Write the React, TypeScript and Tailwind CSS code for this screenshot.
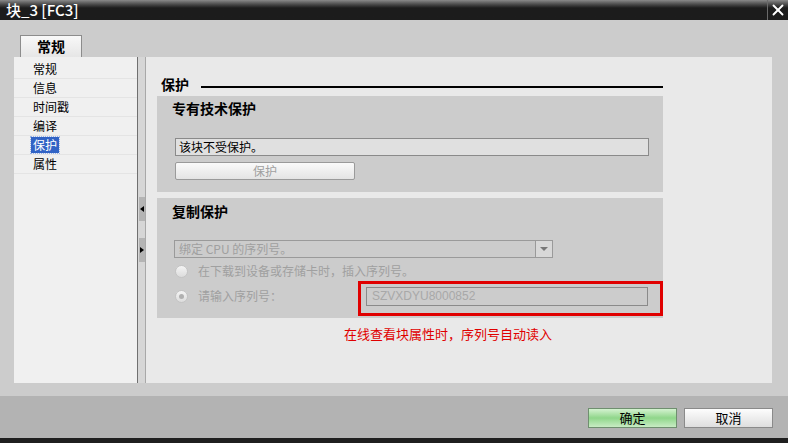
import { X } from 'lucide-react';

const navItems = ['常规', '信息', '时间戳', '编译', '保护', '属性'];

function Radio({ checked }: { checked?: boolean }) {
  return (
    <span className="w-[13px] h-[13px] rounded-full border border-[#c4c4c4] bg-gradient-to-b from-[#f4f4f4] to-[#dcdcdc] flex items-center justify-center">
      {checked && <span className="w-[5px] h-[5px] rounded-full bg-[#b0b0b0]" />}
    </span>
  );
}

function App() {
  return (
    <div className="w-[788px] h-[443px] bg-[#cccccc] flex flex-col font-['Noto_Sans_CJK_SC','Liberation_Sans',sans-serif] text-[12px] text-black overflow-hidden">
      {/* title bar */}
      <div className="h-[20px] flex bg-gradient-to-b from-[#8a8a8a] via-[#1c1c1c] via-40% to-[#1c1c1c]">
        <div className="flex-1 pl-[6px] text-white font-medium text-[15px] leading-[20px]">块_3 [FC3]</div>
        <div className="w-[21px] border-l border-[#6a6a6a] flex items-center justify-center">
          <X size={18} strokeWidth={2.5} className="text-white" />
        </div>
      </div>

      {/* tab strip */}
      <div className="h-[37px] flex items-end pl-[20px]">
        <div className="w-[62px] h-[22px] border border-b-0 border-[#8c8c8c] bg-gradient-to-b from-[#f8f8f8] to-[#e6e6e6] flex items-center justify-center font-bold text-[14px]">
          常规
        </div>
      </div>

      {/* panel */}
      <div className="ml-[14px] mr-[16px] h-[326px] flex">
        {/* nav */}
        <div className="w-[124px] bg-[#f0f0f0] pt-[3px] border-r border-[#707070]">
          {navItems.map((item) => (
            <div key={item} className="h-[19px] border-b border-[#e4e4e4] pl-[17px] flex items-center">
              {item === '保护' ? (
                <span className="bg-[#3163c5] text-white px-[2px] leading-[16px] outline outline-1 outline-dotted outline-[#9bb4e6]">
                  {item}
                </span>
              ) : (
                <span className="px-[2px] leading-[16px]">{item}</span>
              )}
            </div>
          ))}
        </div>

        {/* splitter */}
        <div className="w-[8px] bg-[#d6d6d6] border-r border-[#a8a8a8] flex flex-col items-center pt-[140px] gap-[17px]">
          <div className="w-[6px] h-[24px] bg-[#b4b4b4] flex items-center justify-center">
            <span className="w-0 h-0 border-y-[3px] border-y-transparent border-r-[4px] border-r-black" />
          </div>
          <div className="w-[6px] h-[24px] bg-[#b4b4b4] flex items-center justify-center">
            <span className="w-0 h-0 border-y-[3px] border-y-transparent border-l-[4px] border-l-black" />
          </div>
        </div>

        {/* content */}
        <div className="flex-1 bg-[#e9e9e9] pl-[11px] relative">
          <div className="h-[39px] flex items-end pb-[4px] w-[506px]">
            <span className="font-bold text-[14px] leading-[16px] pl-[4px]">保护</span>
            <div className="flex-1 ml-[12px] mb-[4px] h-[2px] bg-black" />
          </div>

          {/* know-how protection */}
          <div className="w-[506px] h-[96px] bg-[#cccccc]">
            <div className="pl-[15px] pt-[4px] font-bold text-[14px] leading-[16px]">专有技术保护</div>
            <div className="ml-[18px] mt-[22px] w-[474px] h-[18px] bg-[#e0e0e0] border border-[#8a8a8a] pl-[3px] leading-[16px]">
              该块不受保护。
            </div>
            <div className="ml-[18px] mt-[6px] w-[180px] h-[18px] border border-[#9a9a9a] rounded-[2px] bg-gradient-to-b from-[#fafafa] to-[#e4e4e4] text-[#a0a0a0] flex items-center justify-center">
              保护
            </div>
          </div>

          {/* copy protection */}
          <div className="mt-[6px] w-[506px] h-[120px] bg-[#cccccc]">
            <div className="pl-[15px] pt-[5px] font-bold text-[14px] leading-[16px]">复制保护</div>
            <div className="ml-[17px] mt-[21px] w-[379px] h-[18px] border border-[#9a9a9a] bg-[#cccccc] flex">
              <span className="flex-1 pl-[4px] leading-[16px] text-[#a0a0a0]">绑定 CPU 的序列号。</span>
              <span className="w-[17px] border-l border-[#9a9a9a] bg-[#d8d8d8] flex items-center justify-center">
                <span className="w-0 h-0 border-x-[4px] border-x-transparent border-t-[4px] border-t-[#777]" />
              </span>
            </div>
            <div className="ml-[18px] mt-[4px] h-[18px] flex items-center gap-[10px] text-[#a0a0a0]">
              <Radio />
              <span>在下载到设备或存储卡时，插入序列号。</span>
            </div>
            <div className="ml-[18px] mt-[5px] h-[22px] flex items-center text-[#a0a0a0]">
              <Radio checked />
              <span className="ml-[10px] w-[168px]">请输入序列号：</span>
              <span className="w-[282px] h-[19px] border border-[#8a8a8a] bg-[#cccccc] pl-[5px] leading-[17px] text-[#a8a8a8] font-['Liberation_Sans',sans-serif]">
                SZVXDYU8000852
              </span>
            </div>
          </div>

          <div className="absolute left-[212px] top-[224px] w-[305px] h-[35px] border-[3px] border-[#e00000]" />

          <div className="pl-[187px] mt-[8px] text-[#e00000] text-[13px] leading-[16px]">在线查看块属性时，序列号自动读入</div>
        </div>
      </div>

      {/* footer */}
      <div className="mt-[13px] h-[42px] bg-[#b3b3b3] flex items-center justify-end pr-[15px] gap-[7px] pt-[2px]">
        <div className="w-[89px] h-[20px] border border-[#6f8f6f] bg-gradient-to-b from-[#d4f2d0] via-[#8fd68a] to-[#c8ecc4] flex items-center justify-center text-[13px]">
          确定
        </div>
        <div className="w-[89px] h-[20px] border border-[#8a8a8a] bg-gradient-to-b from-[#fdfdfd] to-[#dedede] flex items-center justify-center text-[13px]">
          取消
        </div>
      </div>
      <div className="flex-1 bg-[#1f1f1f]" />
    </div>
  );
}

export default App;
